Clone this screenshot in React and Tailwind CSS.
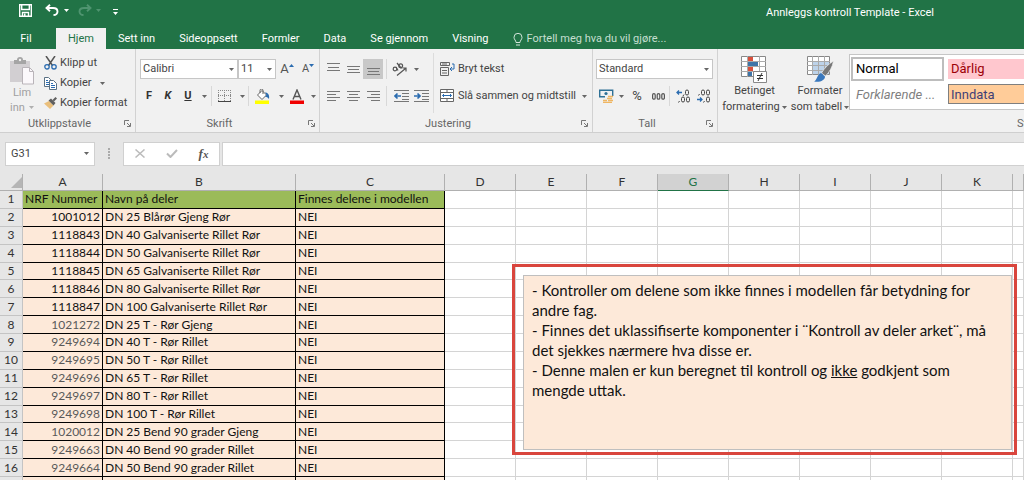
import React from "react";
import clsx from "clsx";

const tabs = ["Sett inn", "Sideoppsett", "Formler", "Data", "Se gjennom", "Visning"];

const columns = ["A", "B", "C", "D", "E", "F", "G", "H", "I", "J", "K", ""];

const parts = [
  ["1001012", "DN 25 Blårør Gjeng Rør"],
  ["1118843", "DN 40 Galvaniserte Rillet Rør"],
  ["1118844", "DN 50 Galvaniserte Rillet Rør"],
  ["1118845", "DN 65 Galvaniserte Rillet Rør"],
  ["1118846", "DN 80 Galvaniserte Rillet Rør"],
  ["1118847", "DN 100 Galvaniserte Rillet Rør"],
  ["1021272", "DN 25 T - Rør Gjeng"],
  ["9249694", "DN 40 T - Rør Rillet"],
  ["9249695", "DN 50 T - Rør Rillet"],
  ["9249696", "DN 65 T - Rør Rillet"],
  ["9249697", "DN 80 T - Rør Rillet"],
  ["9249698", "DN 100 T - Rør Rillet"],
  ["1020012", "DN 25 Bend 90 grader Gjeng"],
  ["9249663", "DN 40 Bend 90 grader Rillet"],
  ["9249664", "DN 50 Bend 90 grader Rillet"],
  ["", ""],
];

const Caret = ({ className = "text-[#666]" }) => (
  <svg viewBox="0 0 5 3" className={clsx("h-[3px] w-[5px] shrink-0", className)} aria-hidden="true">
    <path d="M0 0h5L2.5 3z" fill="currentColor" />
  </svg>
);

const Launcher = ({ label }) => (
  <button aria-label={label} className="flex w-4 shrink-0 items-center justify-center">
    <svg viewBox="0 0 7 7" className="size-[7px]" fill="none" stroke="#777">
      <path d="M.5 5V.5H5M3 3l3 3M6.5 3v3.5H3" />
    </svg>
  </button>
);

const Group = ({ label, className, children }) => (
  <section
    aria-label={label}
    className={clsx("flex shrink-0 flex-col border-r border-[#d2d2d2]", className)}
  >
    <div className="h-[66px]">{children}</div>
    <div className="flex h-4">
      <span className="flex-1 pt-px text-center leading-4 text-[#666]">{label}</span>
      <Launcher label={`${label} innstillinger`} />
    </div>
  </section>
);

const Tool = ({ label, className, children }) => (
  <button
    aria-label={label}
    className={clsx("flex h-5 shrink-0 items-center justify-center", className)}
  >
    {children}
  </button>
);

const Separator = () => <span className="h-5 w-px shrink-0 bg-[#d8d8d8]" />;

const Picker = ({ label, value, className }) => (
  <label className={clsx("relative flex h-5 shrink-0 items-center", className)}>
    <select
      aria-label={label}
      className="size-full appearance-none border border-[#c6c6c6] bg-white pl-[2px] text-[11px] leading-4 text-[#444]"
    >
      <option>{value}</option>
    </select>
    <span className="pointer-events-none absolute right-1">
      <Caret />
    </span>
  </label>
);

const Lines = ({ d }) => (
  <svg viewBox="0 0 13 12" className="h-3 w-[13px]" stroke="#777" fill="none">
    <path d={d} />
  </svg>
);

const Indent = ({ flip }) => (
  <svg viewBox="0 0 15 12" className="h-3 w-[15px]" fill="none">
    <path d="M0 .5h15M8 3.5h7M8 6.5h7M8 9.5h7M0 11.5h15" stroke="#777" />
    <path
      d={flip ? "M0 6h6M3.5 3.5 6 6 3.5 8.5" : "M7 6H1M3.5 3.5 1 6l2.5 2.5"}
      stroke="#2b6cb0"
      strokeWidth="1.7"
    />
  </svg>
);

const Decimals = ({ more }) => (
  <svg viewBox="0 0 14 14" className="size-[14px]" fill="none" aria-hidden="true">
    <path
      d={more ? "M6 3.5H1M3 1.5l-2 2 2 2" : "M1 10.5h5M4 8.5l2 2-2 2"}
      stroke="#2b6cb0"
      strokeWidth="1.3"
    />
    <g stroke="#444">
      {more ? (
        <>
          <rect x="9.5" y="1" width="3" height="5" rx="1.5" />
          <rect x="5.5" y="8" width="3" height="5" rx="1.5" />
          <rect x="10.5" y="8" width="3" height="5" rx="1.5" />
          <path d="M8 5.5 7 7M3.5 12l-1 1.5" />
        </>
      ) : (
        <>
          <rect x="5.5" y="1" width="3" height="5" rx="1.5" />
          <rect x="10.5" y="1" width="3" height="5" rx="1.5" />
          <rect x="10.5" y="8" width="3" height="5" rx="1.5" />
          <path d="M3.5 5l-1 1.5M8.5 12l-1 1.5" />
        </>
      )}
    </g>
  </svg>
);

const TitleBar = () => (
  <div className="flex h-7 items-start justify-between pt-1 pr-[90px] pl-[19px]">
    <div className="flex h-3 items-center text-white">
      <button aria-label="Lagre" className="mr-[13px]">
        <svg viewBox="0 0 13 13" className="size-[13px]" fill="none" stroke="currentColor" strokeWidth="1.4">
          <path d="M.7.7h11.6v11.6H.7zM2.7 1v4.5h7.6V1M3.5 12V8.5h6V12" />
          <path d="M5 9.5h1.5V12H5z" fill="currentColor" stroke="none" />
        </svg>
      </button>
      <button aria-label="Angre" className="flex items-center gap-[5px]">
        <svg viewBox="0 0 14 12" className="h-3 w-[14px]" fill="none" stroke="currentColor" strokeWidth="1.9">
          <path d="M5 .8 1.5 4 5 7.2M1.5 4H8c3 0 4.5 1.5 4.5 3.5S11 11 8.5 11" />
        </svg>
        <Caret className="text-white" />
      </button>
      <button aria-label="Gjør om" className="ml-[9px] flex items-center gap-1">
        <svg viewBox="0 0 14 12" className="h-3 w-[14px]" fill="none" stroke="#4f9470" strokeWidth="1.9">
          <path d="M9 .8 12.5 4 9 7.2M12.5 4H6C3 4 1.5 5.5 1.5 7.5S3 11 5.5 11" />
        </svg>
        <Caret className="text-[#4f9470]" />
      </button>
      <button aria-label="Tilpass verktøylinjen for hurtigtilgang" className="ml-3">
        <svg viewBox="0 0 5 6" className="mt-1 h-[6px] w-[5px]">
          <path d="M0 0h5v1H0zM0 3h5L2.5 6z" fill="currentColor" />
        </svg>
      </button>
    </div>
    <h1 className="pt-px leading-4 text-white">Annleggs kontroll Template - Excel</h1>
  </div>
);

const TabBar = () => (
  <nav className="flex h-[21px] items-stretch text-white">
    <button className="w-14 pt-px pr-1">Fil</button>
    <button className="w-[50px] bg-[#f1f1f1] pt-px text-[#217346]">Hjem</button>
    {tabs.map((tab) => (
      <button key={tab} className="px-3 pt-px">
        {tab}
      </button>
    ))}
    <label className="flex flex-1 items-center gap-1 pt-px pl-3">
      <svg viewBox="0 0 10 13" className="h-[13px] w-[10px]" fill="none" stroke="#d3e6db">
        <path d="M3 9.5C3 7.5 1 6.5 1 4.3a4 4 0 0 1 8 0C9 6.5 7 7.5 7 9.5zM3 12h4" />
      </svg>
      <input
        aria-label="Fortell meg hva du vil gjøre"
        placeholder="Fortell meg hva du vil gjøre..."
        className="w-[180px] outline-none placeholder:text-[#c5dfd0]"
      />
    </label>
  </nav>
);

const Clipboard = () => (
  <Group label="Utklippstavle" className="w-[136px]">
    <div className="flex pt-1">
      <button className="flex w-[44px] flex-col items-center pt-1 leading-[15px] text-[#a0a0a0]">
        <svg viewBox="0 0 26 28" className="h-7 w-[26px]">
          <path d="M1 4h20v21H1z" fill="#d2cfd2" />
          <path d="M5 3h3a3 3 0 0 1 6 0h3v4H5z" fill="#a5a5a5" />
          <circle cx="11" cy="3" r="1.2" fill="#f1f1f1" />
          <path d="M13.5 10.5h7l4 4V27h-11z" fill="#fbf8fb" stroke="#b9b4b9" />
          <path d="M20.5 10.5v4h4" fill="none" stroke="#b9b4b9" />
        </svg>
        <span>Lim</span>
        <span className="flex items-center gap-1">
          inn <Caret className="text-[#b0b0b0]" />
        </span>
      </button>
      <div className="flex flex-col text-[#444]">
        <button className="flex h-5 items-center gap-[3px]">
          <svg viewBox="0 0 13 14" className="h-[14px] w-[13px]" fill="none">
            <path d="M2 0l6.5 9.5M11 0 4.5 9.5" stroke="#555" strokeWidth="1.5" />
            <circle cx="3" cy="10.8" r="2.2" stroke="#2b6cb0" strokeWidth="1.3" />
            <circle cx="10" cy="10.8" r="2.2" stroke="#2b6cb0" strokeWidth="1.3" />
          </svg>
          Klipp ut
        </button>
        <button className="flex h-5 items-center gap-[3px]">
          <svg viewBox="0 0 13 13" className="size-[13px]" fill="#fff" stroke="#5a7184">
            <path d="M.5.5h4l2 2v7h-6z" />
            <path d="M2 3.5h2M2 5.5h3M2 7.5h3" stroke="#2b6cb0" />
            <path d="M5.5 3.5h4l3 3v6h-7z" />
            <path d="M7 6.5h2M7 8.5h4M7 10.5h4" stroke="#2b6cb0" />
          </svg>
          Kopier
          <span className="pl-[6px]">
            <Caret />
          </span>
        </button>
        <button className="flex h-5 items-center gap-[3px]">
          <svg viewBox="0 0 13 12" className="h-3 w-[13px]">
            <path d="M0 6.5 5 4l4.5 4.5L6 12z" fill="#eabf7c" />
            <path d="M4.5 3.5 7 1.5l4.5 4.5L9.5 8.5z" fill="#5f5f5f" />
            <path d="M8.5 3 11.5 0 13 1.5l-3 3z" fill="#5f5f5f" />
          </svg>
          Kopier format
        </button>
      </div>
    </div>
  </Group>
);

const Font = () => (
  <Group label="Skrift" className="w-[184px]">
    <div className="flex pt-[10px] pl-1">
      <Picker label="Skrift" value="Calibri" className="w-[98px]" />
      <Picker label="Skriftstørrelse" value="11" className="w-[38px]" />
      <Tool label="Øk skriftstørrelse" className="w-[22px]">
        <span className="text-[13px] text-[#555]">A</span>
        <svg viewBox="0 0 5 3" className="mb-2 h-[3px] w-[5px]">
          <path d="M0 3h5L2.5 0z" fill="#2b6cb0" />
        </svg>
      </Tool>
      <Tool label="Reduser skriftstørrelse" className="w-5">
        <span className="text-[11px] text-[#555]">A</span>
        <svg viewBox="0 0 5 3" className="mb-2 h-[3px] w-[5px]">
          <path d="M0 0h5L2.5 3z" fill="#2b6cb0" />
        </svg>
      </Tool>
    </div>
    <div className="flex items-center pt-[7px] pl-1 text-[#333]">
      <Tool label="Fet" className="w-[18px] font-bold">F</Tool>
      <Tool label="Kursiv" className="w-5 font-bold italic">K</Tool>
      <Tool label="Understreking" className="w-5 font-bold underline">U</Tool>
      <Tool label="Flere understrekinger" className="w-3">
        <Caret />
      </Tool>
      <span className="w-[3px]" />
      <Separator />
      <Tool label="Kantlinjer" className="w-6">
        <svg viewBox="0 0 13 12" className="h-3 w-[13px]" fill="none" stroke="#888">
          <path d="M.5 0v11M6.5 0v11M12.5 0v11M0 .5h13M0 5.5h13" strokeDasharray="1 1" />
          <path d="M0 11.5h13" stroke="#444" />
        </svg>
      </Tool>
      <Tool label="Flere kantlinjer" className="w-3">
        <Caret />
      </Tool>
      <Separator />
      <Tool label="Fyllfarge" className="w-[26px]">
        <svg viewBox="0 0 15 15" className="size-[15px]">
          <path d="M2.5 6 7 1.5 11.5 6 7 10.5z" fill="#fff" stroke="#666" />
          <path d="M5 4V1.5a1.5 1.5 0 0 1 3 0V5" fill="none" stroke="#666" />
          <path d="M10 3.5c3 0 4.8 2.5 4 6.5-1-1-1.500-2-4-2.500l1.500-1.500z" fill="#2b6cb0" />
          <path d="M0 11.5h14V15H0z" fill="#ffff00" />
        </svg>
      </Tool>
      <Tool label="Flere fyllfarger" className="w-3">
        <Caret />
      </Tool>
      <Tool label="Skriftfarge" className="w-5">
        <svg viewBox="0 0 14 15" className="h-[15px] w-[14px]">
          <path d="M3 10.5 7 1l4 9.5M4.5 7.5h5" fill="none" stroke="#555" strokeWidth="1.4" />
          <path d="M0 11.5h14V15H0z" fill="#f00000" />
        </svg>
      </Tool>
      <Tool label="Flere skriftfarger" className="w-3">
        <Caret />
      </Tool>
    </div>
  </Group>
);

const Alignment = () => (
  <Group label="Justering" className="w-[273px]">
    <div className="flex">
      <div className="pt-[10px] pl-[3px]">
        <div className="flex">
          <Tool label="Juster øverst" className="w-5"><Lines d="M0 .5h13M1 4.5h11M0 7.5h13" /></Tool>
          <Tool label="Midtstill loddrett" className="w-5"><Lines d="M0 3.5h13M1 6.5h11M0 9.5h13" /></Tool>
          <Tool label="Juster nederst" className="w-5 bg-[#c8c8c8]"><Lines d="M0 5.5h13M1 8.5h11M0 11.5h13" /></Tool>
          <span className="w-[3px]" />
          <Separator />
          <Tool label="Retning" className="w-6">
            <svg viewBox="0 0 15 14" className="h-[14px] w-[15px]" fill="none" stroke="#555" strokeWidth="1.2">
              <circle cx="3" cy="7" r="1.8" />
              <path d="M4 5l2 3.5M5 1l4.5 5.5" />
              <circle cx="8.7" cy="3.8" r="1.9" />
              <path d="M5 13.5l8.5-7M10.5 6H14v3.5" />
            </svg>
          </Tool>
          <Tool label="Flere retninger" className="w-[10px]">
            <Caret />
          </Tool>
          <span className="w-[2px]" />
        </div>
        <div className="flex pt-[7px]">
          <Tool label="Venstrejuster" className="w-5"><Lines d="M0 1.5h13M0 4.5h9M0 7.5h13M0 10.5h9" /></Tool>
          <Tool label="Midtstill" className="w-5"><Lines d="M0 1.5h13M2 4.5h9M0 7.5h13M2 10.5h9" /></Tool>
          <Tool label="Høyrejuster" className="w-5"><Lines d="M0 1.5h13M4 4.5h9M0 7.5h13M4 10.5h9" /></Tool>
          <span className="w-[3px]" />
          <Separator />
          <span className="w-1" />
          <Tool label="Reduser innrykk" className="w-5"><Indent /></Tool>
          <Tool label="Øk innrykk" className="w-5"><Indent flip /></Tool>
        </div>
      </div>
      <div className="mt-1 ml-[2px] h-[60px] w-px bg-[#dcdcdc]" />
      <div className="flex-1 pt-[10px] pl-[6px] whitespace-nowrap text-[#444]">
        <button className="flex h-5 items-center gap-[3px]">
          <svg viewBox="0 0 15 14" className="h-[14px] w-[15px]" fill="none" stroke="#666">
            <path d="M.5.5h9v3h-9zM.5 5.5h8v8h-8zM2 8.5h5M2 11h5M2 2h5" />
            <path d="M12 2h2v5h-4M12 5l-2 2 2 2" stroke="#2b6cb0" />
          </svg>
          Bryt tekst
        </button>
        <div className="flex pt-[7px]">
          <button className="flex h-5 items-center gap-[3px]">
            <svg viewBox="0 0 15 14" className="h-[14px] w-[15px]" fill="#fff" stroke="#666">
              <path d="M.5.5h13v12H.5zM.5 3.5h13M.5 9.5h13M7 .5v3M7 9.5v3" />
              <path d="M2.5 6.5h9M4 5 2.5 6.5 4 8M10 5l1.5 1.5L10 8" fill="none" stroke="#2b6cb0" />
            </svg>
            Slå sammen og midtstill
          </button>
          <Tool label="Flere slå sammen-valg" className="ml-auto w-4">
            <Caret />
          </Tool>
        </div>
      </div>
    </div>
  </Group>
);

const NumberFormat = () => (
  <Group label="Tall" className="w-[125px]">
    <div className="flex pt-[10px] pl-[3px]">
      <Picker label="Tallformat" value="Standard" className="w-[117px]" />
    </div>
    <div className="flex items-center pt-[7px] pl-1">
      <Tool label="Regnskapsformat" className="w-[18px]">
        <svg viewBox="0 0 15 14" className="h-[14px] w-[15px]" fill="none">
          <path d="M.7 1.2h13v6.5H.7z" stroke="#2f7196" strokeWidth="1.4" />
          <circle cx="7" cy="4.5" r="1.6" fill="#2f7196" />
          <path d="M6 7h9v7H4V10h2z" fill="#f1f1f1" />
          <path d="M9 7.5h5M8 9.5h5M9 11.5h5M4 11.5h4M4 13.5h9" stroke="#efb663" strokeWidth="1.4" />
        </svg>
      </Tool>
      <Tool label="Flere regnskapsformater" className="w-3">
        <Caret />
      </Tool>
      <Tool label="Prosent" className="w-5 text-[13px] text-[#444]">%</Tool>
      <Tool label="Tusenskille" className="w-[22px]">
        <svg viewBox="0 0 13 7" className="h-[7px] w-[13px]" fill="none" stroke="#555" strokeWidth="1.2">
          <rect x=".6" y=".6" width="2.6" height="5.6" rx="1.3" />
          <rect x="5.2" y=".6" width="2.6" height="5.6" rx="1.3" />
          <rect x="9.8" y=".6" width="2.6" height="5.6" rx="1.3" />
        </svg>
      </Tool>
      <Separator />
      <Tool label="Flere desimaler" className="ml-[3px] w-5"><Decimals more /></Tool>
      <Tool label="Færre desimaler" className="w-5"><Decimals /></Tool>
    </div>
  </Group>
);

const Styles = () => (
  <section aria-label="Stiler" className="flex min-w-0 flex-1 flex-col">
    <div className="flex h-[66px] text-[#444]">
      <button className="flex w-[73px] flex-col items-center pt-[7px] leading-4">
        <svg viewBox="0 0 27 27" className="size-[27px]" fill="none">
          <path d="M.5.5h24v20H.5z" fill="#fff" stroke="#888" />
          <path d="M0 5.5h25M0 10.5h25M0 15.5h25M6.5 0v21M18.5 0v21" stroke="#aaa" />
          <path d="M7 1h5v4H7zM7 11h5v4H7z" fill="#d9503c" />
          <path d="M7 6h10v4H7zM7 16h4v4H7z" fill="#3f75a8" />
          <path d="M12.5 15.5h13v11h-13z" fill="#fff" stroke="#888" />
          <path d="M16 19.5h6M16 22.5h6M21 17l-4 8" stroke="#333" />
        </svg>
        <span>Betinget</span>
        <span className="flex items-center gap-[2px]">
          formatering <Caret />
        </span>
      </button>
      <button className="flex w-[58px] flex-col items-center pt-[7px] leading-4 whitespace-nowrap">
        <svg viewBox="0 0 27 27" className="size-[27px]" fill="none">
          <path d="M.5.5h22v18H.5z" fill="#fff" stroke="#888" />
          <path d="M6 5h16v13H6z" fill="#bdd3ea" />
          <path d="M0 5.5h23M0 9.5h23M0 14.5h23M5.5 0v19M11.5 0v19M17.5 0v19" stroke="#aaa" />
          <path d="M26.5 5c-1 6-4 11-8 15l-4-3c3-5 7-9 12-12z" fill="#777" stroke="#f1f1f1" strokeWidth=".7" />
          <path d="M14 17l4 3.5c0 4-5 6-11 5 3-1 3-7 7-8.5z" fill="#3a78bd" />
        </svg>
        <span>Formater</span>
        <span className="flex items-center gap-[2px]">
          som tabell <Caret />
        </span>
      </button>
      <div className="mt-[5px] flex h-[56px] min-w-0 flex-1 gap-1 border border-r-0 border-[#c6c6c6] bg-white pt-[2px] pl-px text-[13px]">
        <div className="flex w-[93px] shrink-0 flex-col gap-1">
          <button className="h-6 border-2 border-[#bdbdbd] pl-[3px] text-left text-black">Normal</button>
          <button className="h-5 pl-[5px] text-left text-[#7f7f7f] italic">Forklarende ...</button>
        </div>
        <div className="flex min-w-0 flex-1 flex-col gap-[5px] pt-[2px]">
          <button className="h-5 bg-[#ffc7ce] pl-[3px] text-left text-[#9c0006]">Dårlig</button>
          <button className="h-5 border border-r-0 border-[#7f7f7f] bg-[#ffcc99] pl-[2px] text-left text-[#3f3f76]">
            Inndata
          </button>
        </div>
      </div>
    </div>
    <span className="w-[7px] self-end overflow-hidden pt-px leading-4 text-[#666]">Stiler</span>
  </section>
);

const FormulaBar = () => (
  <div className="flex h-[41px] items-center pl-[5px]">
    <label className="relative flex h-6 w-[90px] items-center">
      <input
        aria-label="Navneboks"
        defaultValue="G31"
        className="size-full border border-[#d0d0d0] bg-white pl-[5px] text-[#444]"
      />
      <span className="pointer-events-none absolute right-[6px]">
        <Caret />
      </span>
    </label>
    <svg viewBox="0 0 2 11" className="mx-[13px] h-[11px] w-[2px]" fill="#aaa">
      <path d="M0 0h2v2H0zM0 3h2v2H0zM0 6h2v2H0zM0 9h2v2H0z" />
    </svg>
    <div className="flex h-6 w-[97px] items-center justify-around border border-[#d0d0d0] bg-white">
      <button aria-label="Avbryt">
        <svg viewBox="0 0 10 9" className="h-[9px] w-[10px]" stroke="#bbb" strokeWidth="1.5">
          <path d="M.5.5l9 8M9.5.5l-9 8" />
        </svg>
      </button>
      <button aria-label="Skriv inn">
        <svg viewBox="0 0 12 9" className="h-[9px] w-3" stroke="#bbb" strokeWidth="2" fill="none">
          <path d="M1 4.5 4.5 8 11 1" />
        </svg>
      </button>
      <button
        aria-label="Sett inn funksjon"
        className="font-['Liberation_Serif',serif] text-[13px] leading-4 font-bold text-[#555] italic"
      >
        f<span className="text-[11px]">x</span>
      </button>
    </div>
    <input
      aria-label="Formellinje"
      className="ml-[2px] h-6 min-w-0 flex-1 border border-r-0 border-[#d0d0d0] bg-white px-2"
    />
  </div>
);

const FilledCell = ({ heading, className, children }) => (
  <td
    className={clsx(
      "border-r border-b border-black px-[2px]",
      heading ? "bg-[#9bbb59]" : "bg-[#fde9d9]",
      className
    )}
  >
    {children}
  </td>
);

const RowNumber = ({ children }) => (
  <th scope="row" className="border-r border-b border-[#c4c4c4] bg-[#e6e6e6] font-normal text-[#333]">
    {children}
  </th>
);

const BlankCells = () =>
  columns.slice(3).map((c) => <td key={c} className="border-r border-b border-[#d4d4d4]" />);

const Sheet = () => (
  <table className="h-[321px] w-full table-fixed border-separate border-spacing-0 bg-white font-['Lato',sans-serif] text-xs leading-4 whitespace-nowrap text-[#111]">
    <colgroup>
      <col className="w-[23px]" />
      <col className="w-20" />
      <col className="w-[193px]" />
      <col className="w-[149px]" />
      {columns.slice(3, -1).map((c) => (
        <col key={c} className="w-[71px]" />
      ))}
      <col />
    </colgroup>
    <thead>
      <tr>
        <th className="border-r border-b border-[#b0b0b0] bg-[#e6e6e6]">
          <svg viewBox="0 0 11 11" className="ml-auto size-[11px]">
            <path d="M11 0v11H0z" fill="#b5b5b5" />
          </svg>
        </th>
        {columns.map((c) => (
          <th
            key={c}
            scope="col"
            className={clsx(
              "border-r border-b font-normal",
              c === "G"
                ? "border-r-[#b0b0b0] border-b-[#217346] bg-[#d2d2d2] text-[#217346]"
                : "border-[#b0b0b0] bg-[#e6e6e6] text-[#333]"
            )}
          >
            {c}
          </th>
        ))}
      </tr>
    </thead>
    <tbody>
      <tr>
        <RowNumber>1</RowNumber>
        <FilledCell heading>NRF Nummer</FilledCell>
        <FilledCell heading>Navn på deler</FilledCell>
        <FilledCell heading>Finnes delene i modellen</FilledCell>
        <BlankCells />
      </tr>
      {parts.map(([nrf, name], i) => (
        <tr key={i}>
          <RowNumber>{name ? i + 2 : "\u00a0"}</RowNumber>
          <FilledCell className={clsx("text-right", i > 5 && "text-[#595959]")}>{nrf}</FilledCell>
          <FilledCell>{name}</FilledCell>
          <FilledCell>{name && "NEI"}</FilledCell>
          <BlankCells />
        </tr>
      ))}
    </tbody>
  </table>
);

// text box floating over the cells
const Note = () => (
  <aside className="absolute top-[90px] right-[7px] h-[191px] w-[505px] border-[3px] border-[#d9453d] pt-2 pr-[2px] pb-[2px] pl-2">
    <div className="h-full border border-[#bfbfbf] bg-[#fde9d9] px-2 pt-1 font-['Lato',sans-serif] text-[15px] leading-5 text-[#111]">
      <p>- Kontroller om delene som ikke finnes i modellen får betydning for andre fag.</p>
      <p>- Finnes det uklassifiserte komponenter i ¨Kontroll av deler arket¨, må det sjekkes nærmere hva disse er.</p>
      <p>
        - Denne malen er kun beregnet til kontroll og <u>ikke</u> godkjent som mengde uttak.
      </p>
    </div>
  </aside>
);

export default function App() {
  return (
    <div className="flex h-screen flex-col overflow-hidden bg-[#e6e6e6] font-['Roboto',sans-serif] text-[11px]">
      <header className="shrink-0 bg-[#217346]">
        <TitleBar />
        <TabBar />
      </header>
      <div className="flex shrink-0 border-b border-[#cfcfcf] bg-[#f1f1f1]">
        <Clipboard />
        <Font />
        <Alignment />
        <NumberFormat />
        <Styles />
      </div>
      <div className="shrink-0">
        <FormulaBar />
      </div>
      <main className="relative">
        <Sheet />
        <Note />
      </main>
    </div>
  );
}
